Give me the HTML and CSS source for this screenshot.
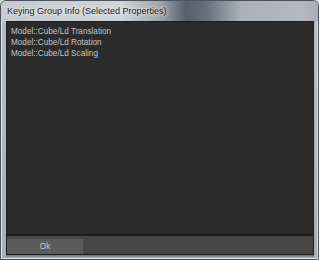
FILE: index.html
```html
<!DOCTYPE html>
<html>
<head>
    <title>Keying Group Info</title>
    <link rel="stylesheet" href="styles.css">
</head>
<body>
    <div class="window">
        <div class="title-bar">
            <span class="title-text">Keying Group Info (Selected Properties)</span>
        </div>
        <div class="client">
            <div class="prop-list">
                <div class="prop-item">Model::Cube/Ld Translation</div>
                <div class="prop-item">Model::Cube/Ld Rotation</div>
                <div class="prop-item">Model::Cube/Ld Scaling</div>
            </div>
            <div class="button-bar">
                <button class="ok-button">Ok</button>
            </div>
        </div>
    </div>
</body>
</html>
```
FILE: styles.css
```css
body {
    margin: 0;
    width: 319px;
    height: 260px;
    overflow: hidden;
    background-color: #d4d8dc;
    font-family: 'Liberation Sans', Arial, sans-serif;
}

.window {
    box-sizing: border-box;
    width: 319px;
    height: 260px;
    border: 1px solid #4b535b;
    border-radius: 6px 6px 0 0;
    background: linear-gradient(to bottom, #c3c8cd 0px, #b6bcc2 20px, #a7afb6 100%);
    box-shadow: inset 1px 1px 0 #e4e7ea, inset -1px -1px 0 #d9dde1;
    display: flex;
    flex-direction: column;
}

.title-bar {
    height: 20px;
    padding-left: 6px;
    display: flex;
    align-items: center;
    border-radius: 5px 5px 0 0;
    background: linear-gradient(to right, #c6cace 0px, #d0d4d7 120px, #9aa2aa 160px, #56606a 185px, #66707a 205px, #aab1b7 240px, #b3b9bf 300px, #a9afb5 317px);
}

.title-text {
    font-size: 9px;
    color: #161616;
    padding: 2px 4px 2px 0;
    text-shadow: 0 0 3px #ffffff, 0 0 6px #eef0f2;
}

.client {
    margin: 0 4px 0 5px;
    height: 232px;
    border: 1px solid #1d1d1d;
    display: flex;
    flex-direction: column;
    box-shadow: 0 1px 0 #6e7c8a, 0 2px 0 #7b8896;
}

.prop-list {
    flex: 1;
    background-color: #2b2b2b;
    border-bottom: 2px solid #1c1c1c;
    padding: 4px 4px;
}

.prop-item {
    font-size: 8.2px;
    line-height: 11px;
    color: #c4c4c4;
}

.button-bar {
    height: 15px;
    padding-top: 3px;
    background-color: #474747;
    display: flex;
}

.ok-button {
    width: 76px;
    height: 15px;
    border: none;
    padding: 0;
    background-color: #5b5b5b;
    color: #c8c8c8;
    font-family: 'Liberation Sans', Arial, sans-serif;
    font-size: 8.2px;
}
```
